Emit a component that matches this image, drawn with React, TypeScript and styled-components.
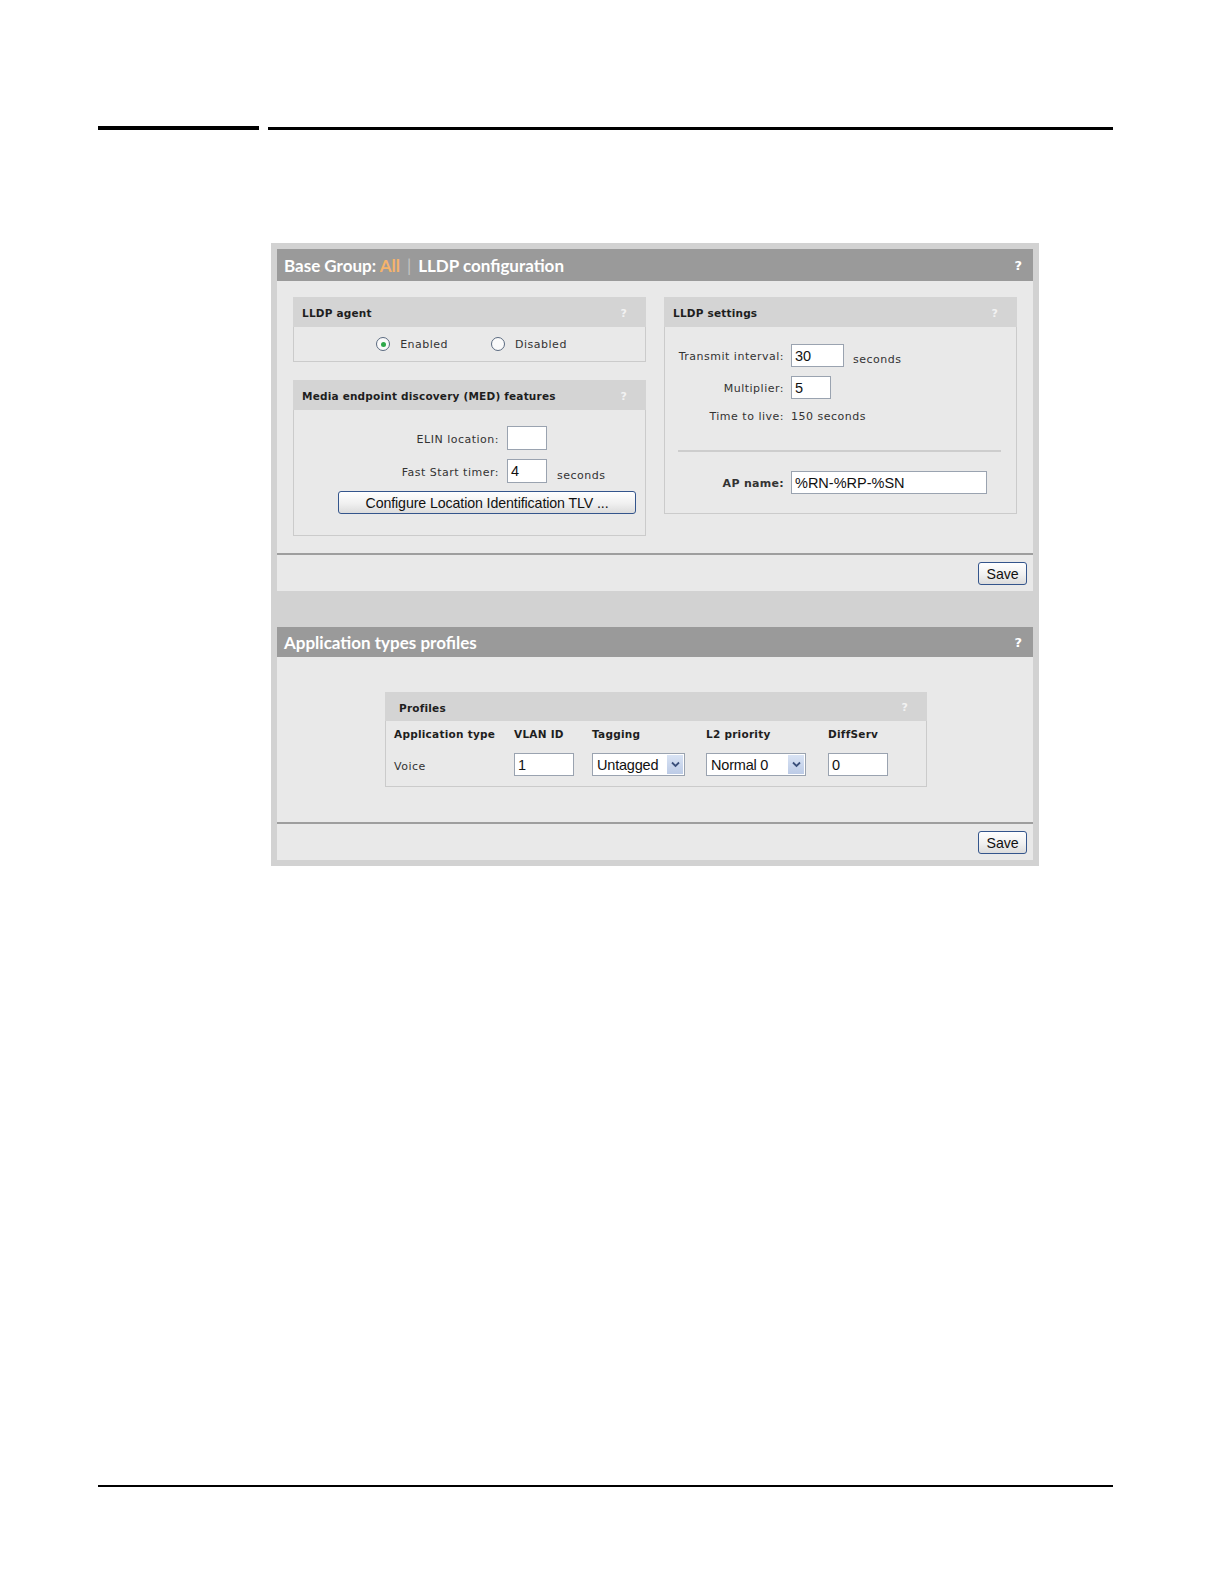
import { FC } from "react";
import styled, { createGlobalStyle } from "styled-components";

const GlobalStyle = createGlobalStyle`
  html, body {
    margin: 0;
    padding: 0;
    background: #ffffff;
  }
  body {
    font-family: "DejaVu Sans", Verdana, sans-serif;
  }
`;

const Page = styled.div`
  padding-top: 126px;
  padding-bottom: 60px;
`;

const TopRules = styled.div`
  display: flex;
  align-items: flex-end;
  gap: 9px;
  margin-left: 98px;
`;

const Rule = styled.div<{ $w: number; $h: number }>`
  width: ${(p) => p.$w}px;
  height: ${(p) => p.$h}px;
  background: #000;
`;

const Frame = styled.div`
  width: 768px;
  margin: 113px 0 0 271px;
  padding: 6px;
  box-sizing: border-box;
  background: #d2d2d2;
  display: flex;
  flex-direction: column;
  gap: 36px;
`;

const BottomRule = styled.div`
  width: 1015px;
  height: 2px;
  background: #000;
  margin: 619px 0 0 98px;
`;

const Panel = styled.div`
  background: #e9e9e9;
  display: flex;
  flex-direction: column;
`;

const TitleBar = styled.div<{ $h: number }>`
  height: ${(p) => p.$h}px;
  background: #9a9a9a;
  display: flex;
  align-items: center;
  justify-content: space-between;
  padding: 0 11px 0 7px;
  color: #fff;
  font-family: "Lato", "DejaVu Sans", sans-serif;
  font-weight: 700;
  font-size: 17px;
`;

const Accent = styled.span`
  color: #f5b36b;
`;

const Divider = styled.span`
  color: #c4c4c4;
  font-weight: 400;
  margin: 0 7px;
`;

const Help = styled.span<{ $light?: boolean }>`
  color: ${(p) => (p.$light ? "#f2f2f2" : "#ffffff")};
  font-weight: 700;
  font-family: "DejaVu Sans", sans-serif;
  font-size: ${(p) => (p.$light ? "11px" : "13px")};
`;

const Body = styled.div<{ $h: number }>`
  height: ${(p) => p.$h}px;
  box-sizing: border-box;
`;

const TwoCols = styled.div`
  display: flex;
  gap: 18px;
  padding: 16px 16px 0;
`;

const Column = styled.div`
  display: flex;
  flex-direction: column;
  gap: 18px;
  width: 353px;
`;

const Box = styled.div<{ $w?: number }>`
  width: ${(p) => (p.$w ? `${p.$w}px` : "100%")};
  display: flex;
  flex-direction: column;
`;

const BoxHeader = styled.div<{ $h?: number; $pl?: number }>`
  height: ${(p) => p.$h ?? 30}px;
  background: #d4d4d4;
  display: flex;
  align-items: center;
  justify-content: space-between;
  padding: 2px 19px 0 ${(p) => p.$pl ?? 9}px;
  box-sizing: border-box;
  font-size: 10.5px;
  letter-spacing: 0.2px;
  font-weight: 700;
  color: #1e1e1e;
`;

const BoxBody = styled.div<{ $h: number }>`
  height: ${(p) => p.$h}px;
  box-sizing: border-box;
  border: 1px solid #cbcbcb;
  border-top: none;
`;

const RadioRow = styled.div`
  height: 100%;
  display: flex;
  align-items: center;
  justify-content: center;
  gap: 43px;
  padding-left: 4px;
`;

const RadioItem = styled.label`
  display: flex;
  align-items: center;
  gap: 10px;
  font-size: 11px;
  letter-spacing: 0.5px;
  color: #333;
`;

const RadioCircle = styled.span<{ $on?: boolean }>`
  width: 12px;
  height: 12px;
  border-radius: 50%;
  border: 1px solid #5a6a80;
  background: #fafafa;
  display: flex;
  align-items: center;
  justify-content: center;
  &::after {
    content: "";
    width: 5px;
    height: 5px;
    border-radius: 50%;
    background: ${(p) => (p.$on ? "#2ea84a" : "transparent")};
  }
`;

const FormRows = styled.div<{ $pt: number; $gap: number }>`
  display: flex;
  flex-direction: column;
  gap: ${(p) => p.$gap}px;
  padding-top: ${(p) => p.$pt}px;
`;

const FormRow = styled.div<{ $label: number; $gap: number }>`
  display: grid;
  grid-template-columns: ${(p) => p.$label}px auto auto;
  column-gap: ${(p) => p.$gap}px;
  align-items: center;
  justify-content: start;
`;

const Label = styled.span<{ $bold?: boolean; $left?: boolean }>`
  text-align: ${(p) => (p.$left ? "left" : "right")};
  font-size: 11px;
  letter-spacing: ${(p) => (p.$bold ? "0.3px" : "0.5px")};
  color: #333;
  font-weight: ${(p) => (p.$bold ? 700 : 400)};
  padding-top: 2px;
`;

const Unit = styled.span`
  font-size: 11px;
  letter-spacing: 0.5px;
  color: #333;
  margin-left: -2px;
  padding-top: 8px;
`;

const TextField = styled.div<{ $w: number; $h?: number }>`
  width: ${(p) => p.$w}px;
  height: ${(p) => p.$h ?? 24}px;
  box-sizing: border-box;
  border: 1px solid #9aa3b0;
  background: #fff;
  font-family: "Liberation Sans", Arial, sans-serif;
  font-size: 14.5px;
  color: #111;
  padding: 0 3px;
  display: flex;
  align-items: center;
`;

const PushButton = styled.div<{ $w: number }>`
  width: ${(p) => p.$w}px;
  height: 23px;
  box-sizing: border-box;
  border: 1px solid #34558c;
  border-radius: 3px;
  background: linear-gradient(#ffffff, #f0f0f0 55%, #dcdcdc);
  font-family: "Liberation Sans", Arial, sans-serif;
  font-size: 14.2px;
  letter-spacing: -0.1px;
  color: #111;
  display: flex;
  align-items: center;
  justify-content: center;
`;

const ButtonRow = styled.div`
  padding-left: 44px;
  margin-top: -1px;
`;

const Separator = styled.div`
  height: 2px;
  background: #cdcdcd;
  margin: 27px 15px 19px 13px;
`;

const SaveLine = styled.div`
  height: 2px;
  background: #9e9e9e;
`;

const SaveRow = styled.div`
  height: 36px;
  display: flex;
  justify-content: flex-end;
  align-items: flex-start;
  padding: 7px 6px 0 0;
  box-sizing: border-box;
`;

const ProfilesWrap = styled.div`
  padding: 35px 0 0 108px;
`;

const Grid = styled.div`
  display: grid;
  grid-template-columns: 120px 78px 114px 122px 1fr;
  grid-template-rows: 26px 35px;
  align-items: center;
  padding: 0 8px;
`;

const ColHead = styled.span`
  font-size: 10.5px;
  letter-spacing: 0.25px;
  font-weight: 700;
  color: #1e1e1e;
  padding-bottom: 1px;
`;

const Cell = styled.span`
  font-size: 11px;
  letter-spacing: 0.5px;
  color: #333;
  padding-top: 4px;
`;

const SelectBox = styled.div<{ $w: number }>`
  width: ${(p) => p.$w}px;
  height: 23px;
  box-sizing: border-box;
  border: 1px solid #9aa3b0;
  background: #fff;
  display: flex;
  align-items: stretch;
  justify-content: space-between;
  font-family: "Liberation Sans", Arial, sans-serif;
  font-size: 14.5px;
  color: #111;
  padding: 1px 1px 1px 4px;
`;

const SelectText = styled.span`
  display: flex;
  align-items: center;
  letter-spacing: -0.2px;
`;

const SelectArrow = styled.span`
  width: 16px;
  background: linear-gradient(#d9e3f4, #bccbe6);
  display: flex;
  align-items: center;
  justify-content: center;
`;

const Chevron: FC = () => (
  <svg width="9" height="7" viewBox="0 0 9 7">
    <path d="M1 1.5 L4.5 5 L8 1.5" fill="none" stroke="#3a4f7a" strokeWidth="1.8" />
  </svg>
);

const Select: FC<{ w: number; value: string }> = ({ w, value }) => (
  <SelectBox $w={w}>
    <SelectText>{value}</SelectText>
    <SelectArrow>
      <Chevron />
    </SelectArrow>
  </SelectBox>
);

const App: FC = () => {
  return (
    <>
      <GlobalStyle />
      <Page>
        <TopRules>
          <Rule $w={161} $h={4} />
          <Rule $w={845} $h={3} />
        </TopRules>

        <Frame>
          <Panel>
            <TitleBar $h={32}>
              <span>
                Base Group: <Accent>All</Accent>
                <Divider>|</Divider>LLDP configuration
              </span>
              <Help>?</Help>
            </TitleBar>
            <Body $h={272}>
              <TwoCols>
                <Column>
                  <Box>
                    <BoxHeader>
                      <span>LLDP agent</span>
                      <Help $light>?</Help>
                    </BoxHeader>
                    <BoxBody $h={35}>
                      <RadioRow>
                        <RadioItem>
                          <RadioCircle $on />
                          Enabled
                        </RadioItem>
                        <RadioItem>
                          <RadioCircle />
                          Disabled
                        </RadioItem>
                      </RadioRow>
                    </BoxBody>
                  </Box>
                  <Box>
                    <BoxHeader>
                      <span>Media endpoint discovery (MED) features</span>
                      <Help $light>?</Help>
                    </BoxHeader>
                    <BoxBody $h={126}>
                      <FormRows $pt={16} $gap={9}>
                        <FormRow $label={205} $gap={8}>
                          <Label>ELIN location:</Label>
                          <TextField $w={40} />
                        </FormRow>
                        <FormRow $label={205} $gap={8}>
                          <Label>Fast Start timer:</Label>
                          <TextField $w={40}>4</TextField>
                          <Unit>&nbsp;seconds</Unit>
                        </FormRow>
                        <ButtonRow>
                          <PushButton $w={298}>Configure Location Identification TLV ...</PushButton>
                        </ButtonRow>
                      </FormRows>
                    </BoxBody>
                  </Box>
                </Column>
                <Column>
                  <Box>
                    <BoxHeader>
                      <span>LLDP settings</span>
                      <Help $light>?</Help>
                    </BoxHeader>
                    <BoxBody $h={187}>
                      <FormRows $pt={17} $gap={9}>
                        <FormRow $label={119} $gap={7}>
                          <Label>Transmit interval:</Label>
                          <TextField $w={53} $h={23}>30</TextField>
                          <Unit>&nbsp;seconds</Unit>
                        </FormRow>
                        <FormRow $label={119} $gap={7}>
                          <Label>Multiplier:</Label>
                          <TextField $w={40} $h={23}>5</TextField>
                        </FormRow>
                        <FormRow $label={119} $gap={7}>
                          <Label>Time to live:</Label>
                          <Label $left>150 seconds</Label>
                        </FormRow>
                      </FormRows>
                      <Separator />
                      <FormRow $label={119} $gap={7}>
                        <Label $bold>AP name:</Label>
                        <TextField $w={196} $h={23}>%RN-%RP-%SN</TextField>
                      </FormRow>
                    </BoxBody>
                  </Box>
                </Column>
              </TwoCols>
            </Body>
            <SaveLine />
            <SaveRow>
              <PushButton $w={49}>Save</PushButton>
            </SaveRow>
          </Panel>

          <Panel>
            <TitleBar $h={30}>
              <span>Application types profiles</span>
              <Help>?</Help>
            </TitleBar>
            <Body $h={165}>
              <ProfilesWrap>
                <Box $w={542}>
                  <BoxHeader $h={29} $pl={14}>
                    <span>Profiles</span>
                    <Help $light>?</Help>
                  </BoxHeader>
                  <BoxBody $h={66}>
                    <Grid>
                      <ColHead>Application type</ColHead>
                      <ColHead>VLAN ID</ColHead>
                      <ColHead>Tagging</ColHead>
                      <ColHead>L2 priority</ColHead>
                      <ColHead>DiffServ</ColHead>
                      <Cell>Voice</Cell>
                      <TextField $w={60} $h={23}>1</TextField>
                      <Select w={93} value="Untagged" />
                      <Select w={100} value="Normal 0" />
                      <TextField $w={60} $h={23}>0</TextField>
                    </Grid>
                  </BoxBody>
                </Box>
              </ProfilesWrap>
            </Body>
            <SaveLine />
            <SaveRow>
              <PushButton $w={49}>Save</PushButton>
            </SaveRow>
          </Panel>
        </Frame>

        <BottomRule />
      </Page>
    </>
  );
};

export default App;
